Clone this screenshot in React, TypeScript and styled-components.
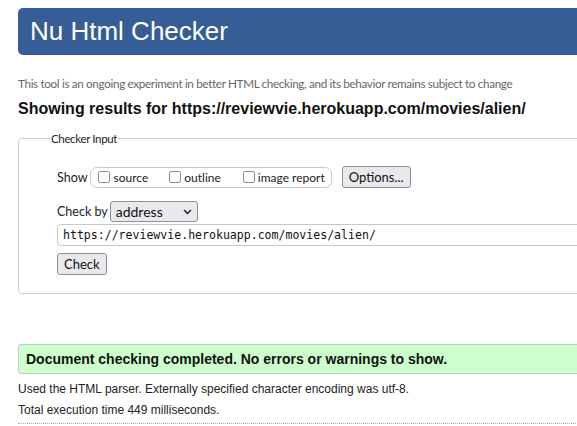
import React from "react";
import styled, { createGlobalStyle } from "styled-components";

const Global = createGlobalStyle`
  html, body { margin: 0; padding: 0; background: #fff; overflow: hidden; }
  body { font-family: "Liberation Sans", Arial, sans-serif; color: #111; }
`;

const Page = styled.div`
  width: 760px;
  padding: 8px 0 0 18px;
`;

const Header = styled.h1`
  margin: 0;
  background: #365d95;
  color: #fff;
  border-radius: 5px;
  height: 47px;
  display: flex;
  align-items: center;
  padding-left: 12px;
  font-weight: normal;
  font-size: 26px;
  font-family: "Liberation Sans", Arial, sans-serif;
`;

const Intro = styled.p`
  margin: 21px 0 0;
  font-family: Lato, sans-serif;
  font-size: 11.7px;
  letter-spacing: -0.34px;
  color: #666;
`;

const Results = styled.h2`
  margin: 10px 0 0;
  font-size: 16px;
  font-weight: bold;
  color: #111;
`;

const Fieldset = styled.fieldset`
  margin: 14px 0 0;
  border: 1px solid #ccc;
  border-radius: 4px;
  padding: 14px 38px 17px 38px;
  height: 162px;
  box-sizing: border-box;
`;

const Legend = styled.legend`
  margin-left: -7px;
  padding: 0 1px;
  font-family: Lato, sans-serif;
  font-size: 11.5px;
  letter-spacing: -0.35px;
  color: #222;
`;

const ControlFont = `font-family: Lato, sans-serif; font-size: 12px; color: #222;`;

const Row = styled.div`
  display: flex;
  align-items: center;
  ${ControlFont}
  font-size: 12.5px;
`;

const Group = styled.div`
  display: flex;
  align-items: center;
  border: 1px solid #c8c8c8;
  border-radius: 7px;
  height: 19px;
  margin-left: 3px;
  padding: 0 6px 0 7px;
`;

const Option = styled.label`
  display: flex;
  align-items: center;
  margin-right: ${(p: { gap: number }) => p.gap}px;
  ${ControlFont}
`;

const Box = styled.span`
  width: 10px;
  height: 10px;
  border: 1.5px solid #8f8f9d;
  border-radius: 2px;
  margin-right: 3px;
  box-sizing: content-box;
`;

const Button = styled.span`
  display: inline-flex;
  align-items: center;
  justify-content: center;
  height: 20px;
  padding: 0 6px;
  border: 1px solid #8f8f9d;
  border-radius: 3px;
  background: #e9e9ed;
  ${ControlFont}
  font-size: 13px;
  color: #111;
`;

const Select = styled.span`
  display: inline-flex;
  align-items: center;
  justify-content: space-between;
  width: 76px;
  height: 19px;
  margin-left: 2px;
  padding: 0 5px;
  border: 1px solid #8f8f9d;
  border-radius: 3px;
  background: #e9e9ed;
  font-family: Lato, sans-serif;
  font-size: 14px;
  color: #111;
`;

const UrlInput = styled.div`
  margin-top: 2px;
  height: 20px;
  border: 1px solid #c8c8c8;
  border-radius: 4px;
  display: flex;
  align-items: center;
  padding-left: 5px;
  font-family: "DejaVu Sans Mono", monospace;
  font-size: 11.55px;
  color: #111;
  margin-right: -40px;
`;

const Success = styled.div`
  margin-top: 50px;
  height: 28px;
  background: #ccffcc;
  border: 1px solid #c8c8c8;
  border-radius: 3px;
  display: flex;
  align-items: center;
  padding-left: 7px;
  font-weight: bold;
  font-size: 14px;
  color: #111;
`;

const Note = styled.p`
  margin: ${(p: { top: number }) => p.top}px 0 0;
  font-size: 12px;
  color: #222;
`;

const Dotted = styled.div`
  margin-top: 6px;
  border-top: 1px dotted #aaa;
`;

export default function App() {
  return (
    <>
      <Global />
      <Page>
        <Header>Nu Html Checker</Header>
        <Intro>
          This tool is an ongoing experiment in better HTML checking, and its behavior remains subject to change
        </Intro>
        <Results>Showing results for https://reviewvie.herokuapp.com/movies/alien/</Results>
        <Fieldset>
          <Legend>Checker Input</Legend>
          <Row style={{ marginTop: 7 }}>
            Show
            <Group>
              <Option gap={21}>
                <Box />source
              </Option>
              <Option gap={22}>
                <Box />outline
              </Option>
              <Option gap={0}>
                <Box />image report
              </Option>
            </Group>
            <Button style={{ marginLeft: 10 }}>Options...</Button>
          </Row>
          <Row style={{ marginTop: 13 }}>
            Check by
            <Select>
              address
              <svg width="9" height="6" viewBox="0 0 9 6">
                <path d="M1 1l3.5 3.5L8 1" stroke="#222" strokeWidth="1.5" fill="none" />
              </svg>
            </Select>
          </Row>
          <UrlInput>https://reviewvie.herokuapp.com/movies/alien/</UrlInput>
          <Row style={{ marginTop: 7 }}>
            <Button>Check</Button>
          </Row>
        </Fieldset>
        <Success>Document checking completed. No errors or warnings to show.</Success>
        <Note top={8}>Used the HTML parser. Externally specified character encoding was utf-8.</Note>
        <Note top={7}>Total execution time 449 milliseconds.</Note>
        <Dotted />
      </Page>
    </>
  );
}
